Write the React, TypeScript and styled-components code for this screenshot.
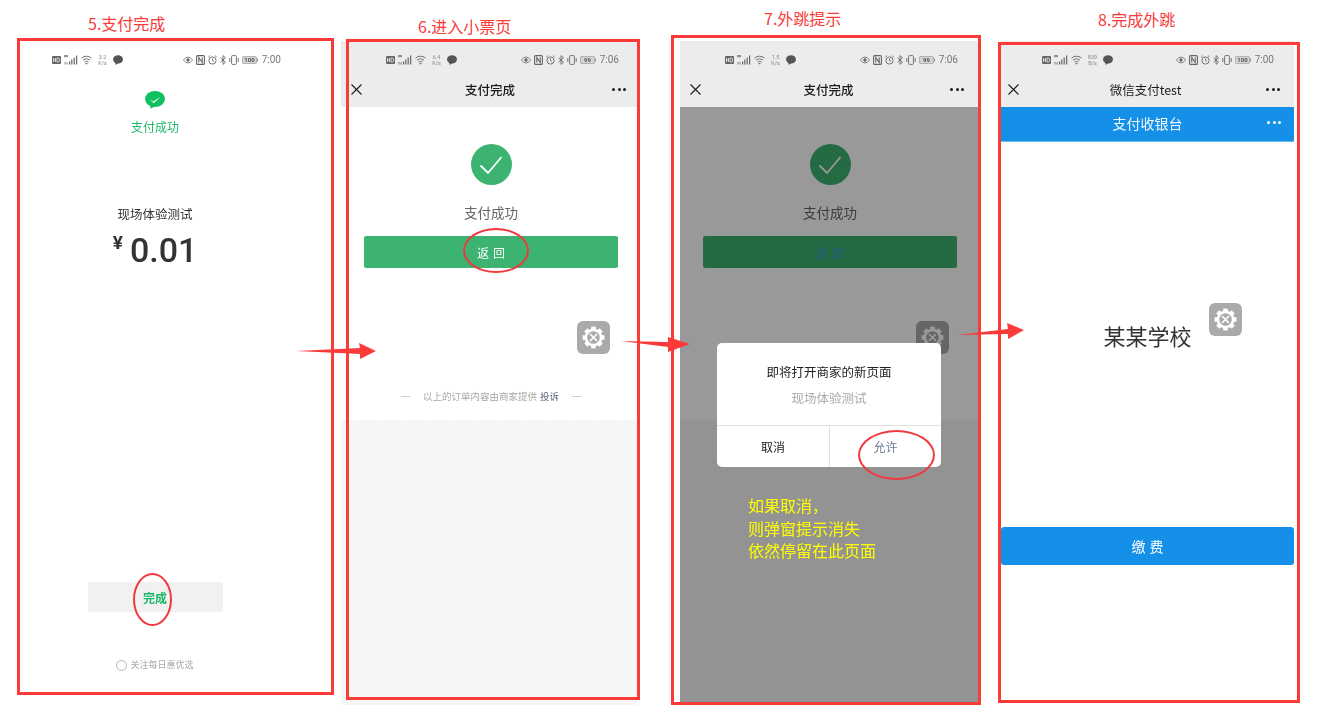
import React from "react";
import styled, { createGlobalStyle } from "styled-components";

const CJK = `"Noto Sans CJK SC", "Noto Sans", sans-serif`;
const RED = "#fb3a3a";

const Global = createGlobalStyle`
  html, body { margin: 0; padding: 0; background: #fff; }
  body { font-family: ${CJK}; overflow: hidden; }
`;

const Canvas = styled.div`
  position: relative;
  width: 1323px;
  height: 713px;
  overflow: hidden;
  background: #fff;
`;

const StepLabel = styled.div<{ $x: number; $y: number }>`
  position: absolute;
  left: ${(p) => p.$x}px;
  top: ${(p) => p.$y}px;
  font-size: 16px;
  line-height: 20px;
  color: ${RED};
  white-space: nowrap;
`;

const Frame = styled.div<{ $x: number; $y: number; $w: number; $h: number }>`
  position: absolute;
  left: ${(p) => p.$x}px;
  top: ${(p) => p.$y}px;
  width: ${(p) => p.$w}px;
  height: ${(p) => p.$h}px;
  box-sizing: border-box;
  border: 3px solid ${RED};
  pointer-events: none;
`;

const Ring = styled.div<{ $x: number; $y: number; $w: number; $h: number }>`
  position: absolute;
  left: ${(p) => p.$x}px;
  top: ${(p) => p.$y}px;
  width: ${(p) => p.$w}px;
  height: ${(p) => p.$h}px;
  box-sizing: border-box;
  border: 2.5px solid #ee3a3f;
  border-radius: 50%;
`;

const Screen = styled.div<{ $x: number; $w: number; $h: number }>`
  position: absolute;
  left: ${(p) => p.$x}px;
  top: 41px;
  width: ${(p) => p.$w}px;
  height: ${(p) => p.$h}px;
  display: flex;
  flex-direction: column;
  background: #fff;
  overflow: hidden;
  filter: blur(0.3px);
`;

const Chrome = styled.div<{ $tint: boolean }>`
  background: ${(p) => (p.$tint ? "#ececec" : "transparent")};
  flex: none;
`;

const StatusRow = styled.div<{ $l: number; $r: number }>`
  height: 31px;
  box-sizing: border-box;
  padding: 7px ${(p) => p.$r}px 0 ${(p) => p.$l}px;
  display: flex;
  align-items: center;
  justify-content: space-between;
  color: #666;
`;

const IconGroup = styled.div`
  display: flex;
  align-items: center;
  gap: 3px;
`;

const Speed = styled.div`
  width: 11px;
  margin: 0 2px;
  font: 5.5px/6px Roboto, sans-serif;
  text-align: center;
  color: #888;
`;

const Clock = styled.span`
  font: 10px/12px Roboto, sans-serif;
  color: #777;
  margin-left: 1px;
`;

const Nav = styled.div<{ $l: number; $r: number }>`
  height: 35px;
  box-sizing: border-box;
  padding: 0 ${(p) => p.$r}px 0 ${(p) => p.$l}px;
  display: grid;
  grid-template-columns: 1fr auto 1fr;
  align-items: center;
  color: #111;
`;

const NavTitle = styled.div<{ $plain?: boolean }>`
  font-size: 12.5px;
  line-height: 18px;
  font-weight: ${(p) => (p.$plain ? 400 : 500)};
  color: #1c1c1c;
  padding-left: 3px;
`;

const DotRow = styled.div<{ $light?: boolean }>`
  display: flex;
  gap: 2.5px;
  justify-self: end;
  & > i {
    width: 3px;
    height: 3px;
    border-radius: 50%;
    background: ${(p) => (p.$light ? "#fff" : "#1c1c1c")};
  }
`;

const ReceiptWrap = styled.div`
  position: relative;
  flex: 1;
  display: flex;
  flex-direction: column;
  min-height: 0;
`;

const Receipt = styled.div`
  position: relative;
  width: 300px;
  height: 314px;
  flex: none;
  box-sizing: border-box;
  padding-top: 37px;
  display: flex;
  flex-direction: column;
  align-items: center;
`;

const CheckDisc = styled.div`
  width: 41px;
  height: 41px;
  border-radius: 50%;
  background: #3cb371;
  display: flex;
  align-items: center;
  justify-content: center;
`;

const ResultText = styled.div`
  margin-top: 17px;
  font-size: 13.5px;
  line-height: 20px;
  color: #666;
`;

const BackButton = styled.div<{ $dim?: boolean }>`
  margin-top: 14px;
  width: 254px;
  height: 32px;
  border-radius: 2px;
  background: #3cb371;
  display: flex;
  align-items: center;
  justify-content: center;
  font-size: 12px;
  letter-spacing: 4px;
  text-indent: 4px;
  color: ${(p) => (p.$dim ? "#3a9fd0" : "#fff")};
`;

const GearBadge = styled.div<{ $x: number; $y: number }>`
  position: absolute;
  left: ${(p) => p.$x}px;
  top: ${(p) => p.$y}px;
  width: 33px;
  height: 33px;
  border-radius: 6px;
  background: #aaa;
  display: flex;
  align-items: center;
  justify-content: center;
`;

const Footnote = styled.div`
  margin-top: 121px;
  display: flex;
  align-items: center;
  font-size: 9.5px;
  line-height: 14px;
  color: #a8a8a8;
  white-space: nowrap;
`;

const Dash = styled.i`
  width: 9px;
  height: 1px;
  background: #ccc;
  margin: 0 13px;
`;

const Complain = styled.span`
  color: #59647a;
  margin-left: 3px;
`;

const Tail = styled.div`
  flex: 1;
  position: relative;
  background: #f6f6f6;
  &::before {
    content: "";
    position: absolute;
    left: 0;
    right: 0;
    top: -2px;
    height: 4px;
    background: radial-gradient(circle at 3px 4px, #f6f6f6 3px, transparent 3.5px) 0 0 / 6px 4px repeat-x;
  }
`;

const Dimmer = styled.div`
  position: absolute;
  inset: 0;
  background: rgba(0, 0, 0, 0.4);
  padding-top: 236px;
  padding-left: 37px;
  display: flex;
  flex-direction: column;
  align-items: flex-start;
`;

const Dialog = styled.div`
  width: 224px;
  height: 124px;
  background: #fff;
  border-radius: 5px;
  display: flex;
  flex-direction: column;
  overflow: hidden;
`;

const DialogBody = styled.div`
  height: 83px;
  box-sizing: border-box;
  padding-top: 20px;
  border-bottom: 1px solid #e2e2e2;
  text-align: center;
  flex: none;
`;

const DialogTitle = styled.div`
  font-size: 12.5px;
  line-height: 18px;
  color: #222;
`;

const DialogSub = styled.div`
  margin-top: 8px;
  font-size: 12.5px;
  line-height: 18px;
  color: #aaa;
`;

const DialogActions = styled.div`
  flex: 1;
  display: grid;
  grid-template-columns: 112px 1fr;
`;

const DialogAction = styled.div<{ $muted?: boolean }>`
  display: flex;
  align-items: center;
  justify-content: center;
  font-size: 12px;
  color: ${(p) => (p.$muted ? "#6b7d96" : "#222")};
  border-left: ${(p) => (p.$muted ? "1px solid #e2e2e2" : "none")};
`;

const Note = styled.div`
  margin: 27px 0 0 31px;
  font-size: 16px;
  line-height: 22.5px;
  color: #ffff00;
  white-space: nowrap;
`;

/* frame 1 */
const PaidBody = styled.div`
  flex: 1;
  display: flex;
  flex-direction: column;
  align-items: center;
  padding-top: 19px;
`;

const PaidLabel = styled.div`
  margin-top: 9px;
  font-size: 12px;
  line-height: 18px;
  color: #1bb968;
`;

const Merchant = styled.div`
  margin-top: 69px;
  font-size: 12.5px;
  line-height: 18px;
  color: #333;
`;

const AmountRow = styled.div`
  margin-top: 7px;
  display: flex;
  align-items: flex-start;
  height: 40px;
  color: #333;
`;

const Yen = styled.span`
  font: 700 19px/26px Roboto, sans-serif;
  margin: 0 7px 0 0;
`;

const Amount = styled.span`
  font: 500 34px/40px Roboto, sans-serif;
`;

const DoneButton = styled.div`
  margin-top: 312px;
  width: 135px;
  height: 30px;
  border-radius: 2px;
  background: #f1f1f1;
  display: flex;
  align-items: center;
  justify-content: center;
  font-size: 12px;
  font-weight: 700;
  color: #1bb968;
`;

const FollowRow = styled.div`
  margin-top: 47px;
  display: flex;
  align-items: center;
  gap: 3px;
  font-size: 9px;
  line-height: 12px;
  color: #aaa;
`;

const Radio = styled.i`
  width: 11px;
  height: 11px;
  box-sizing: border-box;
  border: 1px solid #b5b5b5;
  border-radius: 50%;
`;

/* frame 4 */
const CashierBar = styled.div`
  height: 35px;
  flex: none;
  box-sizing: border-box;
  padding: 0 13px 3px;
  display: grid;
  grid-template-columns: 1fr auto 1fr;
  align-items: center;
  background: #1490e8;
  border-bottom: 1px solid #6bbcf0;
  color: #f2f8fd;
  font-size: 14px;
  line-height: 20px;
`;

const CashierBody = styled.div`
  position: relative;
  flex: 1;
  display: flex;
  flex-direction: column;
  align-items: center;
  padding-top: 178px;
`;

const School = styled.div`
  font-size: 22px;
  line-height: 30px;
  color: #333;
`;

const PayButton = styled.div`
  margin-top: 177px;
  align-self: stretch;
  height: 38px;
  border-radius: 3px;
  background: #1490e8;
  display: flex;
  align-items: center;
  justify-content: center;
  color: #fff;
  font-size: 14px;
  letter-spacing: 4px;
  text-indent: 4px;
`;

const ArrowSvg = styled.svg`
  position: absolute;
  left: 0;
  top: 0;
  width: 1323px;
  height: 713px;
  pointer-events: none;
`;

/* icons */
const Hd = () => (
  <svg width="9" height="8" viewBox="0 0 9 8">
    <rect width="9" height="8" rx="1" fill="#666" />
    <path d="M1.5 2v4M1.5 4h2M3.5 2v4M5 2v4h1.2q1.5 0 1.5-2t-1.5-2z" stroke="#fff" strokeWidth=".7" fill="none" />
  </svg>
);
const Signal = () => (
  <svg width="14" height="10" viewBox="0 0 14 10" fill="#666">
    <rect x="0" y="0" width="4" height="2.2" opacity=".7" />
    <rect x="0" y="7" width="4" height="2.5" opacity=".4" />
    <rect x="5" y="6.5" width="1.2" height="3" />
    <rect x="7.2" y="4.5" width="1.2" height="5" />
    <rect x="9.6" y="2.5" width="1.2" height="7" />
    <rect x="12" y="0.5" width="1.2" height="9" />
  </svg>
);
const Wifi = () => (
  <svg width="11" height="10" viewBox="0 0 11 10" fill="none" stroke="#666" strokeWidth=".9">
    <path d="M.5 3q5-3.6 10 0M2 5q3.5-2.6 7 0M3.5 7q2-1.4 4 0" />
    <rect x="4.6" y="8" width="1.8" height="1.2" fill="#666" stroke="none" />
  </svg>
);
const Bubble = () => (
  <svg width="10" height="10" viewBox="0 0 10 10" fill="#555">
    <ellipse cx="5" cy="4.4" rx="5" ry="4.2" />
    <path d="M2.5 7l0 3 3-2z" />
  </svg>
);
const Eye = () => (
  <svg width="10" height="8" viewBox="0 0 10 8" fill="none" stroke="#666">
    <path d="M.4 4q4.6-6 9.2 0q-4.6 6-9.2 0z" strokeWidth=".8" />
    <circle cx="5" cy="4" r="1.4" fill="#666" strokeWidth=".5" />
  </svg>
);
const Nfc = () => (
  <svg width="9" height="10" viewBox="0 0 9 10" fill="none" stroke="#666" strokeWidth="1.1">
    <rect x=".6" y=".6" width="7.8" height="8.8" rx="1" />
    <path d="M2.8 7.5V2.5l3.4 5V2.5" />
  </svg>
);
const Alarm = () => (
  <svg width="9" height="10" viewBox="0 0 9 10" fill="none" stroke="#666" strokeWidth=".9">
    <circle cx="4.5" cy="5.5" r="3.6" />
    <path d="M4.5 3.5v2l1.5 1M.4 2L2 .6M8.6 2L7 .6" />
  </svg>
);
const Bt = () => (
  <svg width="6" height="10" viewBox="0 0 6 10" fill="none" stroke="#666" strokeWidth=".9">
    <path d="M.5 2.8l5 4.4L3 9.4V.6l2.5 2.2-5 4.4" />
  </svg>
);
const Vibrate = () => (
  <svg width="10" height="10" viewBox="0 0 10 10" fill="none" stroke="#666" strokeWidth=".9">
    <rect x="2.6" y=".6" width="4.8" height="8.8" rx=".8" />
    <path d="M.8 3v4M9.2 3v4" />
  </svg>
);
const Battery = ({ value }: { value: string }) => (
  <svg width="16" height="8" viewBox="0 0 16 8">
    <rect x=".4" y=".4" width="14.2" height="7.2" rx="1.6" fill="#d4d4d4" stroke="#999" strokeWidth=".7" />
    <rect x="15" y="2.5" width="1" height="3" fill="#999" />
    <text x="7.5" y="6.1" textAnchor="middle" fontSize="6" fontWeight="700" fontFamily="Roboto, sans-serif" fill="#555">{value}</text>
  </svg>
);
const Close = () => (
  <svg width="11" height="11" viewBox="0 0 11 11" stroke="#1c1c1c" strokeWidth="1.1">
    <path d="M.5.5l10 10M10.5.5l-10 10" />
  </svg>
);
const Dots = ({ light }: { light?: boolean }) => (
  <DotRow $light={light}><i /><i /><i /></DotRow>
);
const Check = () => (
  <svg width="24" height="20" viewBox="0 0 24 20" fill="none" stroke="#fff" strokeWidth="1.8">
    <path d="M1.5 10.5l7.5 7.5L22.5 2" />
  </svg>
);
const WeChatPay = () => (
  <svg width="20" height="18" viewBox="0 0 20 18">
    <ellipse cx="10" cy="8" rx="10" ry="8" fill="#10c060" />
    <path d="M5 13.5l.6 4.3 4.4-2.6z" fill="#10c060" />
    <path d="M5 8l3 2.4L15.5 6l-7 6.2z" fill="#fff" />
  </svg>
);
const Gear = () => (
  <svg width="23" height="23" viewBox="0 0 23 23" fill="none" stroke="#fff">
    {[0, 45, 90, 135, 180, 225, 270, 315].map((a) => (
      <rect key={a} x="9.2" y="0.6" width="4.6" height="4" fill="#fff" stroke="none" transform={`rotate(${a} 11.5 11.5)`} />
    ))}
    <circle cx="11.5" cy="11.5" r="7.6" strokeWidth="2.6" />
    <path d="M8 8l7 7M15 8l-7 7" strokeWidth="1.7" />
  </svg>
);

type StatusProps = { l: number; r: number; up: string; unit: string; battery: string; time: string };
const StatusBar = ({ l, r, up, unit, battery, time }: StatusProps) => (
  <StatusRow $l={l} $r={r}>
    <IconGroup>
      <Hd />
      <Signal />
      <Wifi />
      <Speed>{up}<br />{unit}</Speed>
      <Bubble />
    </IconGroup>
    <IconGroup>
      <Eye />
      <Nfc />
      <Alarm />
      <Bt />
      <Vibrate />
      <Battery value={battery} />
      <Clock>{time}</Clock>
    </IconGroup>
  </StatusRow>
);

const ReceiptPage = ({ dim }: { dim?: boolean }) => (
  <>
    <Receipt>
      <CheckDisc><Check /></CheckDisc>
      <ResultText>支付成功</ResultText>
      <BackButton $dim={dim}>返回</BackButton>
      <GearBadge $x={236} $y={214}><Gear /></GearBadge>
      <Footnote>
        <Dash />
        以上的订单内容由商家提供<Complain>投诉</Complain>
        <Dash />
      </Footnote>
    </Receipt>
    <Tail />
  </>
);

export default function App() {
  return (
    <Canvas>
      <Global />

      <Screen $x={20} $w={270} $h={650}>
        <Chrome $tint={false}>
          <StatusBar l={32} r={9} up="3.2" unit="K/s" battery="100" time="7:00" />
        </Chrome>
        <PaidBody>
          <WeChatPay />
          <PaidLabel>支付成功</PaidLabel>
          <Merchant>现场体验测试</Merchant>
          <AmountRow>
            <Yen>¥</Yen>
            <Amount>0.01</Amount>
          </AmountRow>
          <DoneButton>完成</DoneButton>
          <FollowRow><Radio />关注每日惠优选</FollowRow>
        </PaidBody>
      </Screen>

      <Screen $x={341} $w={296} $h={664}>
        <Chrome $tint>
          <StatusBar l={45} r={18} up="6.4" unit="K/s" battery="99" time="7:06" />
          <Nav $l={10} $r={11}>
            <Close />
            <NavTitle>支付完成</NavTitle>
            <Dots />
          </Nav>
        </Chrome>
        <ReceiptWrap><ReceiptPage /></ReceiptWrap>
      </Screen>

      <Screen $x={680} $w={298} $h={662}>
        <Chrome $tint>
          <StatusBar l={45} r={20} up="1.5" unit="K/s" battery="99" time="7:06" />
          <Nav $l={10} $r={14}>
            <Close />
            <NavTitle>支付完成</NavTitle>
            <Dots />
          </Nav>
        </Chrome>
        <ReceiptWrap>
          <ReceiptPage dim />
          <Dimmer>
            <Dialog>
              <DialogBody>
                <DialogTitle>即将打开商家的新页面</DialogTitle>
                <DialogSub>现场体验测试</DialogSub>
              </DialogBody>
              <DialogActions>
                <DialogAction>取消</DialogAction>
                <DialogAction $muted>允许</DialogAction>
              </DialogActions>
            </Dialog>
            <Note>如果取消，<br />则弹窗提示消失<br />依然停留在此页面</Note>
          </Dimmer>
        </ReceiptWrap>
      </Screen>

      <Screen $x={1001} $w={293} $h={660}>
        <Chrome $tint>
          <StatusBar l={41} r={20} up="839" unit="B/s" battery="100" time="7:00" />
          <Nav $l={7} $r={14}>
            <Close />
            <NavTitle $plain>微信支付test</NavTitle>
            <Dots />
          </Nav>
        </Chrome>
        <CashierBar>
          <span />
          <span>支付收银台</span>
          <Dots light />
        </CashierBar>
        <CashierBody>
          <School>某某学校</School>
          <GearBadge $x={208} $y={161}><Gear /></GearBadge>
          <PayButton>缴费</PayButton>
        </CashierBody>
      </Screen>

      <StepLabel $x={88} $y={13}>5.支付完成</StepLabel>
      <StepLabel $x={418} $y={16}>6.进入小票页</StepLabel>
      <StepLabel $x={764} $y={8}>7.外跳提示</StepLabel>
      <StepLabel $x={1098} $y={9}>8.完成外跳</StepLabel>

      <Frame $x={17} $y={38} $w={317} $h={657} />
      <Frame $x={346} $y={39} $w={294} $h={661} />
      <Frame $x={671} $y={35} $w={310} $h={670} />
      <Frame $x={998} $y={42} $w={302} $h={661} />

      <Ring $x={133} $y={573} $w={39} $h={53} />
      <Ring $x={463} $y={228} $w={66} $h={45} />
      <Ring $x={858} $y={430} $w={77} $h={50} />

      <ArrowSvg viewBox="0 0 1323 713">
        <g fill="#fb3a3a">
          <polygon points="296,351 360,348 359,343 376,351 360,359 360,354" />
          <polygon points="621,341 668,342 668,337 690,344 668,352 668,347" />
          <polygon points="957,335 1008,329 1007,323 1024,330 1008,339 1008,334" />
        </g>
      </ArrowSvg>
    </Canvas>
  );
}
